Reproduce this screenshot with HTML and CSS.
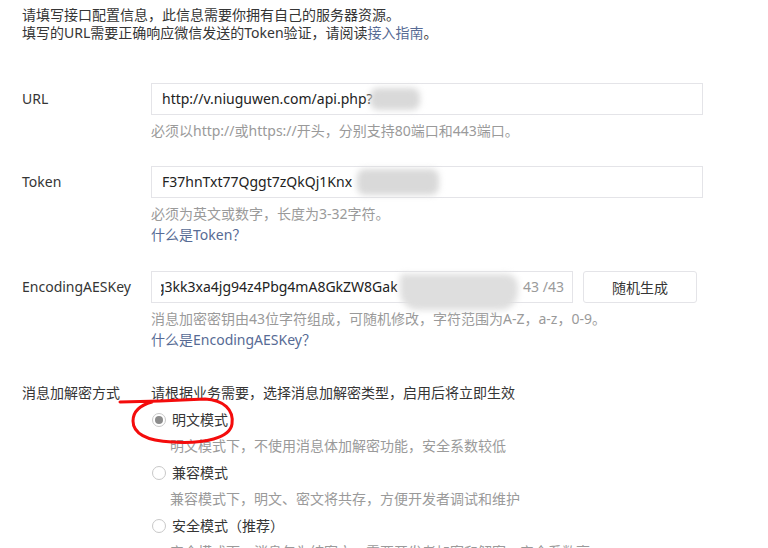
FILE: index.html
```html
<!DOCTYPE html>
<html lang="zh-CN">
<head>
    <meta charset="UTF-8">
    <title>服务器配置</title>
    <link rel="stylesheet" href="styles.css">
</head>
<body>
    <div class="page">
        <div class="intro">
            <p>请填写接口配置信息，此信息需要你拥有自己的服务器资源。</p>
            <p>填写的URL需要正确响应微信发送的Token验证，请阅读<a href="#" class="link">接入指南</a>。</p>
        </div>

        <div class="form-row">
            <label class="form-label">URL</label>
            <div class="form-body">
                <div class="input-box">
                    <span class="input-text">http://v.niuguwen.com/api.php?</span>
                    <span class="mask mask-url"></span>
                </div>
                <p class="hint">必须以http://或https://开头，分别支持80端口和443端口。</p>
            </div>
        </div>

        <div class="form-row">
            <label class="form-label">Token</label>
            <div class="form-body">
                <div class="input-box">
                    <span class="input-text">F37hnTxt77Qggt7zQkQj1Knx</span>
                    <span class="mask mask-token"></span>
                </div>
                <p class="hint">必须为英文或数字，长度为3-32字符。</p>
                <a href="#" class="link help">什么是Token？</a>
            </div>
        </div>

        <div class="form-row">
            <label class="form-label">EncodingAESKey</label>
            <div class="form-body">
                <div class="input-line">
                    <div class="input-box short">
                        <span class="input-text scrolled">g3kk3xa4jg94z4Pbg4mA8GkZW8Gak</span>
                        <span class="counter">43 /43</span>
                        <span class="mask mask-aes"></span>
                    </div>
                    <button class="btn">随机生成</button>
                </div>
                <p class="hint">消息加密密钥由43位字符组成，可随机修改，字符范围为A-Z，a-z，0-9。</p>
                <a href="#" class="link help">什么是EncodingAESKey？</a>
            </div>
        </div>

        <div class="form-row mode-row">
            <label class="form-label">消息加解密方式</label>
            <div class="form-body">
                <p class="mode-desc">请根据业务需要，选择消息加解密类型，启用后将立即生效</p>
                <div class="radio checked"><span class="radio-dot"></span>明文模式</div>
                <p class="radio-hint">明文模式下，不使用消息体加解密功能，安全系数较低</p>
                <div class="radio"><span class="radio-dot"></span>兼容模式</div>
                <p class="radio-hint">兼容模式下，明文、密文将共存，方便开发者调试和维护</p>
                <div class="radio"><span class="radio-dot"></span>安全模式（推荐）</div>
                <p class="radio-hint">安全模式下，消息包为纯密文，需要开发者加密和解密，安全系数高</p>
            </div>
        </div>
    </div>

    <svg class="annotation" width="768" height="548" viewBox="0 0 768 548">
        <path d="M120 402 L160 401 L205 399 C224 400 234 410 232 424 C230 438 205 444 172 442 C146 441 133 433 133 421 C133 411 141 405 152 402" fill="none" stroke="#f40c0c" stroke-width="3" stroke-linecap="round"/>
    </svg>
</body>
</html>
```

FILE: styles.css
```css
:root {
    --text: #353535;
    --hint: #9a9a9a;
    --link: #576b95;
    --border: #e4e4e8;
}

* {
    margin: 0;
    padding: 0;
    box-sizing: border-box;
}

body {
    background: #fff;
    color: var(--text);
    font-family: "Noto Sans", "Noto Sans CJK SC", sans-serif;
    font-size: 14px;
    overflow: hidden;
}

.page {
    padding: 6px 22px 0;
}

.intro p {
    line-height: 18px;
}

.link {
    color: var(--link);
    text-decoration: none;
}

.intro {
    margin-bottom: 41px;
}

.form-row {
    display: flex;
    margin-bottom: 25px;
}

.form-label {
    width: 129px;
    flex-shrink: 0;
    line-height: 32px;
}

.form-body {
    flex: 1;
}

.input-line {
    display: flex;
    gap: 10px;
}

.input-box {
    position: relative;
    width: 552px;
    height: 32px;
    border: 1px solid var(--border);
    padding: 0 10px;
    line-height: 30px;
    white-space: nowrap;
}

.input-box.short {
    width: 422px;
    display: flex;
    justify-content: space-between;
}

.input-text {
    color: #222;
}

.input-text.scrolled {
    margin-left: -6px;
    clip-path: inset(0 0 0 5px);
}

.counter {
    color: var(--hint);
    margin-right: -2px;
}

.btn {
    width: 114px;
    height: 32px;
    border: 1px solid var(--border);
    border-radius: 3px;
    background: #fff;
    color: var(--text);
    font: inherit;
}

.mask {
    position: absolute;
    background: #d9d9d9;
    filter: blur(3px);
    border-radius: 8px;
}

.mask-url {
    left: 218px;
    top: 4px;
    width: 50px;
    height: 22px;
}

.mask-token {
    left: 205px;
    top: 2px;
    width: 82px;
    height: 26px;
}

.mask-aes {
    left: 248px;
    top: 2px;
    width: 118px;
    height: 36px;
    background: #dedede;
    border-radius: 4px 12px 18px 18px;
}

.hint {
    color: var(--hint);
    line-height: 20px;
    margin-top: 6px;
}

.help {
    display: block;
    line-height: 22px;
}

.mode-row {
    margin-top: 33px;
}

.mode-row .form-label {
    line-height: 18px;
}

.mode-desc {
    line-height: 18px;
    margin-bottom: 4px;
}

.radio {
    display: flex;
    align-items: center;
    line-height: 27px;
    gap: 6px;
}

.radio-dot {
    width: 14px;
    height: 14px;
    border: 1px solid #c8c8c8;
    border-radius: 50%;
    display: flex;
    align-items: center;
    justify-content: center;
    margin-left: 1px;
}

.radio.checked .radio-dot::after {
    content: "";
    width: 8px;
    height: 8px;
    border-radius: 50%;
    background: #8c8c8c;
}

.radio-hint {
    color: var(--hint);
    line-height: 26px;
    padding-left: 19px;
}

.annotation {
    position: absolute;
    left: 0;
    top: 0;
    pointer-events: none;
}
```
